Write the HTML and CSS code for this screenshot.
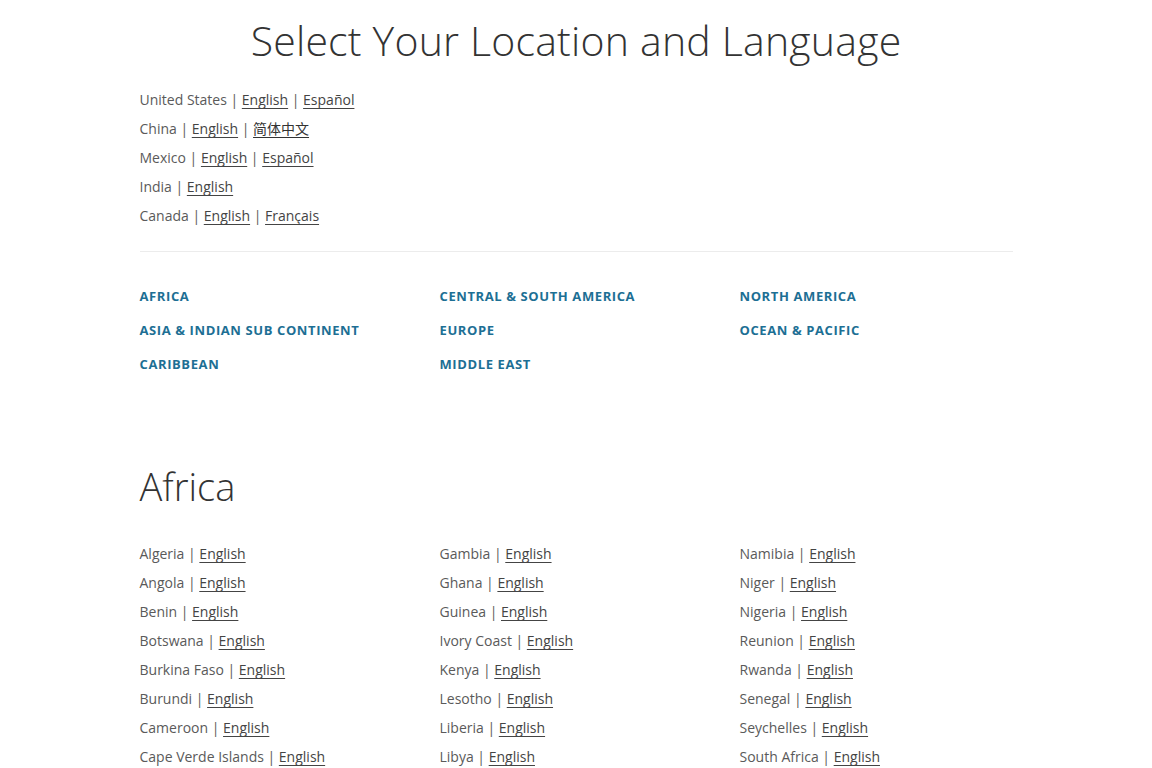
FILE: index.html
```html
<!DOCTYPE html>
<html lang="en">
<head>
<meta charset="utf-8">
<title>Select Your Location and Language</title>
<link rel="stylesheet" href="styles.css">
</head>
<body>
<div class="page">
  <h1 class="title">Select Your Location and Language</h1>
  <ul class="featured">
    <li>United States | <a href="#">English</a> | <a href="#">Español</a></li>
    <li>China | <a href="#">English</a> | <a href="#" class="cjk">简体中文</a></li>
    <li>Mexico | <a href="#">English</a> | <a href="#">Español</a></li>
    <li>India | <a href="#">English</a></li>
    <li>Canada | <a href="#">English</a> | <a href="#">Français</a></li>
  </ul>
  <hr class="rule">
  <ul class="regions">
    <li><a href="#">Africa</a></li>
    <li><a href="#">Central &amp; South America</a></li>
    <li><a href="#">North America</a></li>
    <li><a href="#">Asia &amp; Indian Sub Continent</a></li>
    <li><a href="#">Europe</a></li>
    <li><a href="#">Ocean &amp; Pacific</a></li>
    <li><a href="#">Caribbean</a></li>
    <li><a href="#">Middle East</a></li>
  </ul>
  <section class="region">
    <h2 class="region-title">Africa</h2>
    <div class="countries">
      <ul class="col">
        <li>Algeria | <a href="#">English</a></li>
        <li>Angola | <a href="#">English</a></li>
        <li>Benin | <a href="#">English</a></li>
        <li>Botswana | <a href="#">English</a></li>
        <li>Burkina Faso | <a href="#">English</a></li>
        <li>Burundi | <a href="#">English</a></li>
        <li>Cameroon | <a href="#">English</a></li>
        <li>Cape Verde Islands | <a href="#">English</a></li>
      </ul>
      <ul class="col">
        <li>Gambia | <a href="#">English</a></li>
        <li>Ghana | <a href="#">English</a></li>
        <li>Guinea | <a href="#">English</a></li>
        <li>Ivory Coast | <a href="#">English</a></li>
        <li>Kenya | <a href="#">English</a></li>
        <li>Lesotho | <a href="#">English</a></li>
        <li>Liberia | <a href="#">English</a></li>
        <li>Libya | <a href="#">English</a></li>
      </ul>
      <ul class="col">
        <li>Namibia | <a href="#">English</a></li>
        <li>Niger | <a href="#">English</a></li>
        <li>Nigeria | <a href="#">English</a></li>
        <li>Reunion | <a href="#">English</a></li>
        <li>Rwanda | <a href="#">English</a></li>
        <li>Senegal | <a href="#">English</a></li>
        <li>Seychelles | <a href="#">English</a></li>
        <li>South Africa | <a href="#">English</a></li>
      </ul>
    </div>
  </section>
</div>
</body>
</html>
```

FILE: styles.css
```css
html, body {
  margin: 0;
  padding: 0;
  background: #ffffff;
}
body {
  font-family: "Open Sans", "Noto Sans CJK SC", sans-serif;
  color: #555555;
}
.page {
  width: 873px;
  margin: 0 auto;
}
.title {
  margin: 0;
  padding-top: 14px;
  text-align: center;
  font-weight: 300;
  font-size: 41px;
  line-height: 52px;
  color: #333333;
  letter-spacing: 0.2px;
}
ul {
  list-style: none;
  margin: 0;
  padding: 0;
}
.featured {
  margin-top: 19px;
}
.featured li,
.countries li {
  font-size: 14px;
  line-height: 29px;
  height: 29px;
  color: #5a5a5a;
}
a {
  color: #444444;
  text-decoration: underline;
  text-underline-offset: 3px;
  text-decoration-thickness: 1px;
}
.cjk {
  font-family: "Noto Sans CJK SC", sans-serif;
  color: #333333;
}
.rule {
  border: 0;
  border-top: 1px solid #ececec;
  margin: 21px 0 0 0;
  height: 0;
}
.regions {
  display: grid;
  grid-template-columns: 300px 300px 1fr;
  margin-top: 26px;
}
.regions li {
  height: 34px;
  line-height: 34px;
}
.regions a {
  color: #1d6f94;
  text-decoration: none;
  text-transform: uppercase;
  font-weight: 700;
  font-size: 13px;
  letter-spacing: 0.6px;
}
.region {
  margin-top: 84px;
}
.region-title {
  margin: 0;
  font-weight: 300;
  font-size: 38px;
  line-height: 44px;
  color: #333333;
}
.countries {
  display: grid;
  grid-template-columns: 300px 300px 1fr;
  margin-top: 31px;
}
```
